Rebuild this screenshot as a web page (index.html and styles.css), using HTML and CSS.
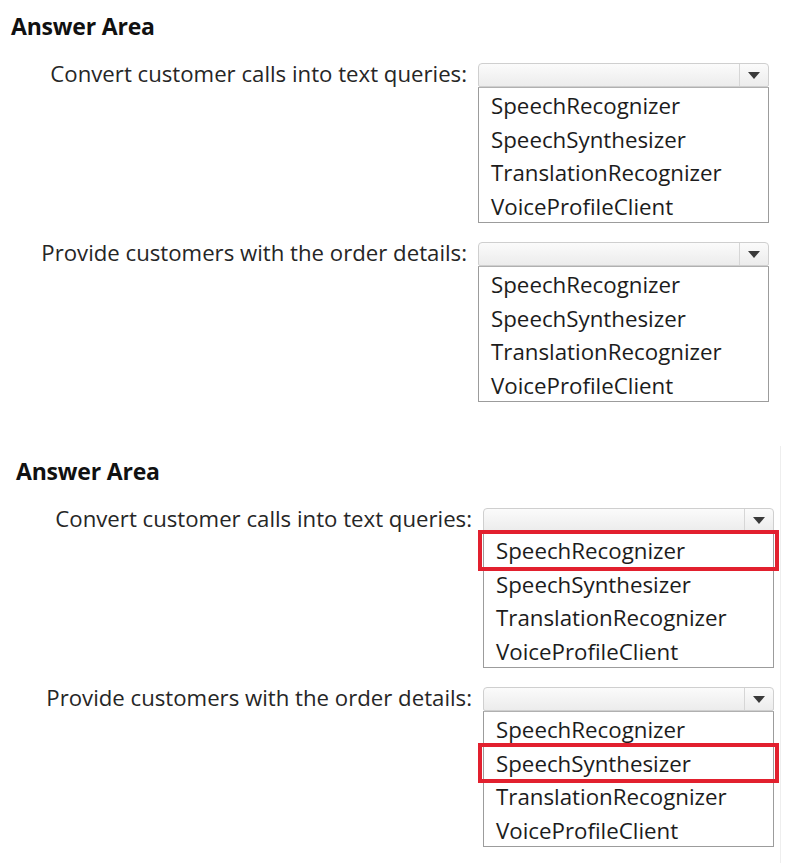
FILE: index.html
```html
<!DOCTYPE html>
<html>
<head>
<meta charset="utf-8">
<link rel="stylesheet" href="styles.css">
</head>
<body>
<div class="page">
  <section class="area area-top">
    <h2 class="title">Answer Area</h2>
    <div class="rows">
      <div class="row">
        <div class="label">Convert customer calls into text queries:</div>
        <div class="field">
          <div class="combo"><span class="combo-value"></span><span class="combo-btn"><span class="tri"></span></span></div>
          <ul class="list">
            <li class="item">SpeechRecognizer</li>
            <li class="item">SpeechSynthesizer</li>
            <li class="item">TranslationRecognizer</li>
            <li class="item">VoiceProfileClient</li>
          </ul>
        </div>
      </div>
      <div class="row">
        <div class="label">Provide customers with the order details:</div>
        <div class="field">
          <div class="combo"><span class="combo-value"></span><span class="combo-btn"><span class="tri"></span></span></div>
          <ul class="list">
            <li class="item">SpeechRecognizer</li>
            <li class="item">SpeechSynthesizer</li>
            <li class="item">TranslationRecognizer</li>
            <li class="item">VoiceProfileClient</li>
          </ul>
        </div>
      </div>
    </div>
  </section>

  <section class="area area-bottom">
    <h2 class="title">Answer Area</h2>
    <div class="rows">
      <div class="row">
        <div class="label">Convert customer calls into text queries:</div>
        <div class="field">
          <div class="combo"><span class="combo-value"></span><span class="combo-btn"><span class="tri"></span></span></div>
          <ul class="list">
            <li class="item selected">SpeechRecognizer</li>
            <li class="item">SpeechSynthesizer</li>
            <li class="item">TranslationRecognizer</li>
            <li class="item">VoiceProfileClient</li>
          </ul>
        </div>
      </div>
      <div class="row">
        <div class="label">Provide customers with the order details:</div>
        <div class="field">
          <div class="combo"><span class="combo-value"></span><span class="combo-btn"><span class="tri"></span></span></div>
          <ul class="list">
            <li class="item">SpeechRecognizer</li>
            <li class="item selected">SpeechSynthesizer</li>
            <li class="item">TranslationRecognizer</li>
            <li class="item">VoiceProfileClient</li>
          </ul>
        </div>
      </div>
    </div>
  </section>
</div>
</body>
</html>
```

FILE: styles.css
```css
* { box-sizing: border-box; }

html, body {
  margin: 0;
  padding: 0;
  background: #ffffff;
}

body {
  font-family: "Open Sans", "Noto Sans", sans-serif;
  color: #222222;
  width: 785px;
  height: 863px;
  overflow: hidden;
}

.page {
  display: flex;
  flex-direction: column;
}

.area {
  position: relative;
}

.area-top {
  padding: 12px 0 0 11px;
  height: 446px;
}

.area-bottom {
  padding: 11px 0 0 16px;
  margin-right: 4px;
  border-right: 1px solid #eeeeee;
  height: 417px;
}

.title {
  margin: 0;
  font-size: 23px;
  line-height: 28px;
  font-weight: 700;
  color: #111111;
  letter-spacing: -0.2px;
}

.rows {
  margin-top: 23px;
  display: flex;
  flex-direction: column;
  gap: 19px;
}

.row {
  display: grid;
  grid-template-columns: 467px 291px;
  align-items: start;
}

.label {
  text-align: right;
  padding-right: 11px;
  font-size: 22.2px;
  line-height: 22px;
  white-space: nowrap;
  color: #262626;
}

.field {
  display: flex;
  flex-direction: column;
}

.combo {
  height: 24px;
  display: flex;
  border: 1px solid #cfcfcf;
  border-radius: 4px 4px 2px 2px;
  background: linear-gradient(#fbfbfb, #ececec);
}

.combo-value {
  flex: 1;
}

.combo-btn {
  width: 29px;
  border-left: 1px solid #d6d6d6;
  display: flex;
  align-items: center;
  justify-content: center;
}

.tri {
  width: 0;
  height: 0;
  border-left: 6px solid transparent;
  border-right: 6px solid transparent;
  border-top: 7px solid #3a3a3a;
}

.list {
  list-style: none;
  margin: 0;
  padding: 1px 0 0 0;
  height: 136px;
  border: 1px solid #9c9c9c;
  border-top-color: #b0b0b0;
  background: #ffffff;
}

.item {
  position: relative;
  height: 33.5px;
  line-height: 33.5px;
  padding-left: 12px;
  font-size: 22.3px;
  color: #1c1c1c;
  white-space: nowrap;
}

.item.selected::after {
  content: "";
  position: absolute;
  left: -6px;
  right: -6px;
  top: -4px;
  bottom: -3px;
  border: 4px solid #e2202e;
}
```
